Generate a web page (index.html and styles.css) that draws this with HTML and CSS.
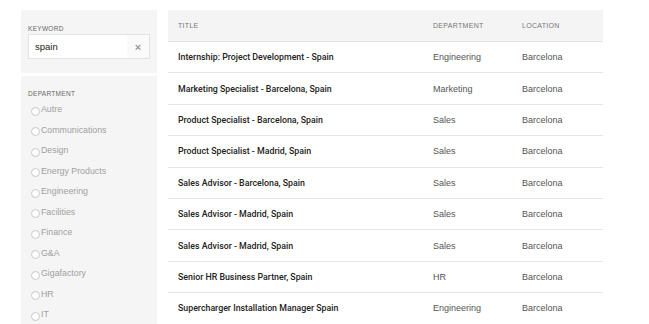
FILE: index.html
```html
<!DOCTYPE html>
<html lang="en">
<head>
  <meta charset="UTF-8">
  <title>Careers</title>
  <link rel="stylesheet" href="styles.css">
</head>
<body>
  <div class="page">
    <aside class="sidebar">
      <div class="panel panel-keyword">
        <div class="label">Keyword</div>
        <div class="search">
          <span class="search-text">spain</span>
          <span class="clear">&times;</span>
        </div>
      </div>
      <div class="panel panel-dept">
        <div class="label">Department</div>
        <ul class="options">
          <li><span class="radio"></span>Autre</li>
          <li><span class="radio"></span>Communications</li>
          <li><span class="radio"></span>Design</li>
          <li><span class="radio"></span>Energy Products</li>
          <li><span class="radio"></span>Engineering</li>
          <li><span class="radio"></span>Facilities</li>
          <li><span class="radio"></span>Finance</li>
          <li><span class="radio"></span>G&amp;A</li>
          <li><span class="radio"></span>Gigafactory</li>
          <li><span class="radio"></span>HR</li>
          <li><span class="radio"></span>IT</li>
        </ul>
      </div>
    </aside>

    <table class="jobs">
      <thead>
        <tr>
          <th class="col-title">Title</th>
          <th class="col-dept">Department</th>
          <th class="col-loc">Location</th>
        </tr>
      </thead>
      <tbody>
        <tr><td class="title">Internship: Project Development - Spain</td><td>Engineering</td><td>Barcelona</td></tr>
        <tr><td class="title">Marketing Specialist - Barcelona, Spain</td><td>Marketing</td><td>Barcelona</td></tr>
        <tr><td class="title">Product Specialist - Barcelona, Spain</td><td>Sales</td><td>Barcelona</td></tr>
        <tr><td class="title">Product Specialist - Madrid, Spain</td><td>Sales</td><td>Barcelona</td></tr>
        <tr><td class="title">Sales Advisor - Barcelona, Spain</td><td>Sales</td><td>Barcelona</td></tr>
        <tr><td class="title">Sales Advisor - Madrid, Spain</td><td>Sales</td><td>Barcelona</td></tr>
        <tr><td class="title">Sales Advisor - Madrid, Spain</td><td>Sales</td><td>Barcelona</td></tr>
        <tr><td class="title">Senior HR Business Partner, Spain</td><td>HR</td><td>Barcelona</td></tr>
        <tr><td class="title">Supercharger Installation Manager Spain</td><td>Engineering</td><td>Barcelona</td></tr>
      </tbody>
    </table>
  </div>
</body>
</html>
```

FILE: styles.css
```css
body {
  margin: 0;
  padding: 0;
  background-color: #fff;
  font-family: "Liberation Sans", Arial, sans-serif;
  color: #333;
}

.page {
  display: flex;
  align-items: flex-start;
  gap: 11px;
  padding: 10px 0 0 21px;
}

/* filtros */
.sidebar {
  width: 136px;
  display: flex;
  flex-direction: column;
  gap: 3px;
}

.panel {
  background-color: #f5f5f5;
  padding: 14px 7px;
}

.label {
  font-size: 6.5px;
  line-height: 9px;
  letter-spacing: 0.3px;
  text-transform: uppercase;
  color: #666;
  margin-bottom: 1px;
}

.search {
  display: flex;
  align-items: center;
  height: 23px;
  background: #fff;
  border: 1px solid #e2e2e2;
  margin-top: 1px;
}

.search-text {
  flex: 1;
  padding-left: 6px;
  font-size: 9.5px;
  color: #222;
}

.clear {
  width: 22px;
  height: 23px;
  display: flex;
  align-items: center;
  justify-content: center;
  background: #fafafa;
  color: #999;
  font-size: 11px;
  font-weight: bold;
}

.panel-dept {
  padding-top: 13px;
  padding-bottom: 4px;
}

.options {
  list-style: none;
  margin: 0;
  padding: 0 0 0 3px;
}

.options li {
  height: 20.5px;
  display: flex;
  align-items: center;
  font-size: 8.8px;
  color: #a0a0a0;
}

.radio {
  width: 7px;
  height: 7px;
  border: 1px solid #c8c8c8;
  border-radius: 50%;
  background: #fff;
  margin-right: 1px;
  position: relative;
  top: 2px;
}

/* tabla */
.jobs {
  width: 435px;
  border-collapse: collapse;
  table-layout: fixed;
}

.jobs th {
  background-color: #f4f4f4;
  height: 31px;
  text-align: left;
  font-weight: normal;
  font-size: 7px;
  letter-spacing: 0.3px;
  text-transform: uppercase;
  color: #777;
  border-bottom: 1px solid #e3e3e3;
  padding: 0;
}

.jobs th.col-title { width: 255px; padding-left: 10px; }
.col-dept { width: 89px; }

.jobs td {
  height: 30.4px;
  padding: 0;
  font-size: 9px;
  color: #555;
  border-bottom: 1px solid #e6e6e6;
}

.jobs td.title {
  padding-left: 10px;
  color: #222;
  font-family: Roboto, "Liberation Sans", sans-serif;
  font-weight: 500;
  font-size: 8.8px;
}
```
